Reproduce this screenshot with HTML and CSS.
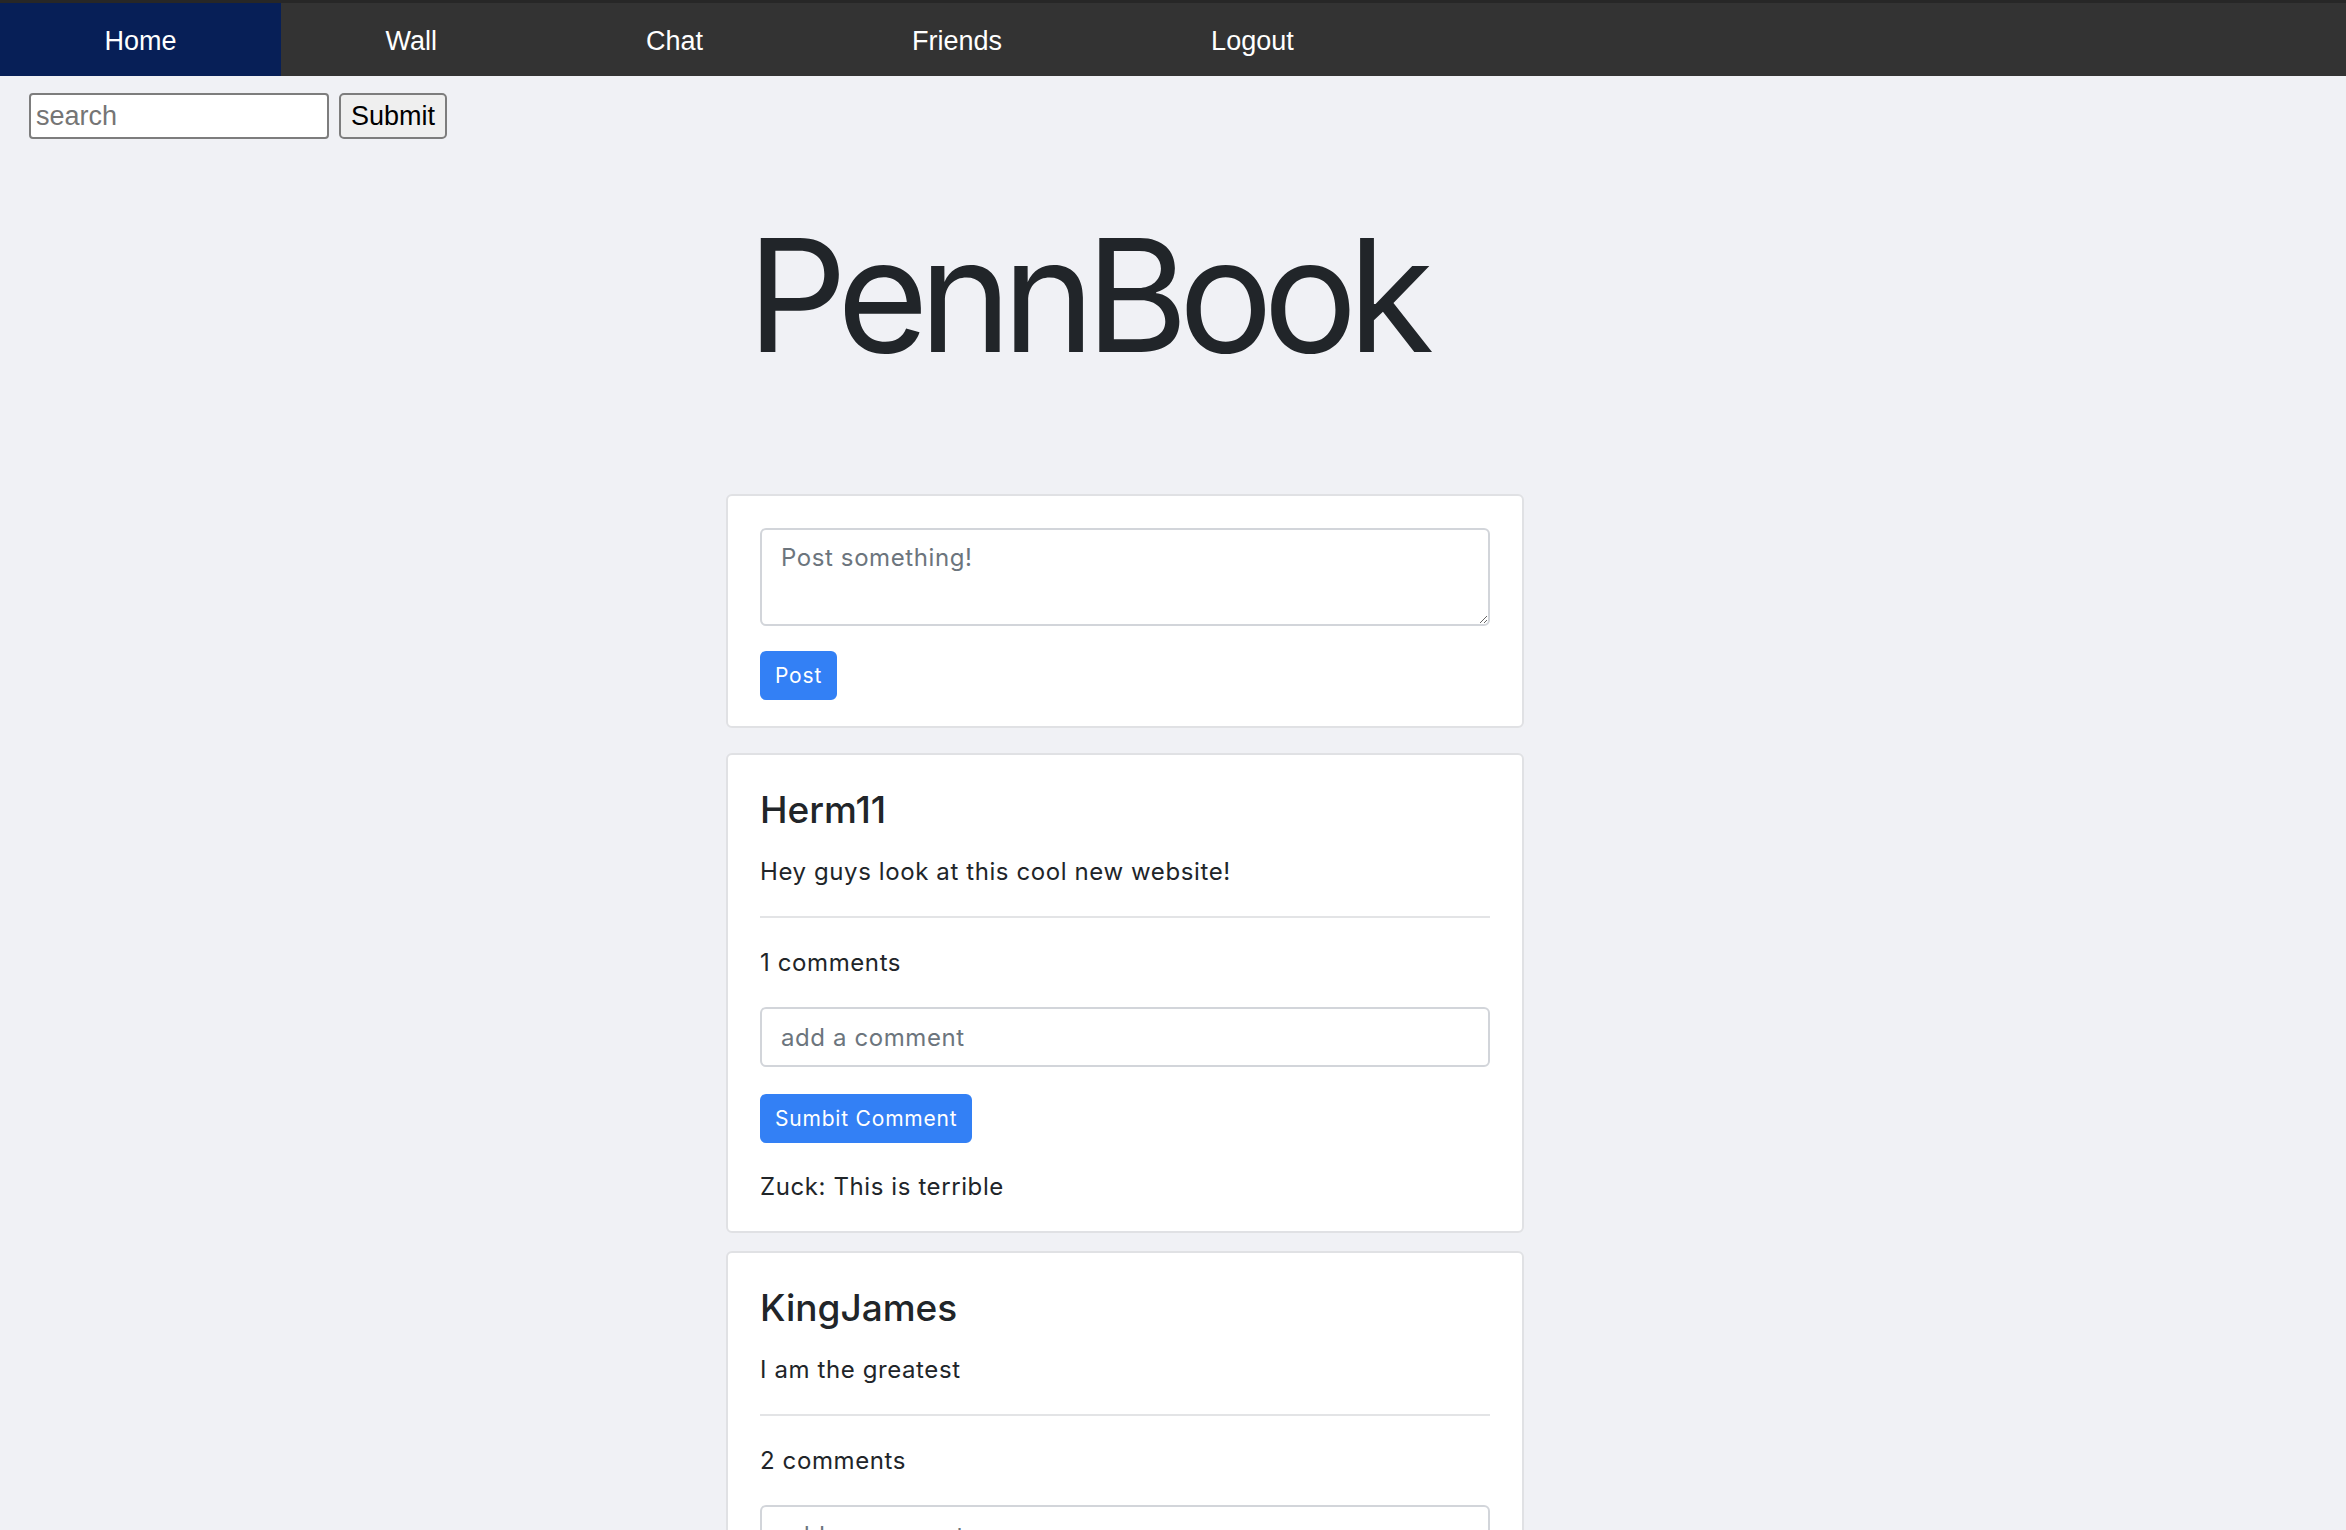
FILE: index.html
```html
<!DOCTYPE html>
<html lang="en">
<head>
<meta charset="utf-8">
<title>PennBook</title>
<link rel="stylesheet" href="styles.css">
</head>
<body>
<nav class="topnav">
  <a class="nav-link active" href="#">Home</a>
  <a class="nav-link" href="#">Wall</a>
  <a class="nav-link" href="#">Chat</a>
  <a class="nav-link" href="#">Friends</a>
  <a class="nav-link" href="#">Logout</a>
</nav>
<form class="search">
  <input class="search-input" type="text" placeholder="search">
  <button class="search-btn" type="button">Submit</button>
</form>
<h1 class="brand">PennBook</h1>
<main class="feed">
  <section class="card composer">
    <textarea class="field area" placeholder="Post something!"></textarea>
    <button class="btn" type="button">Post</button>
  </section>
  <article class="card post">
    <h4 class="author">Herm11</h4>
    <p class="text">Hey guys look at this cool new website!</p>
    <hr class="rule">
    <p class="text">1 comments</p>
    <input class="field line" type="text" placeholder="add a comment">
    <button class="btn" type="button">Sumbit Comment</button>
    <p class="text">Zuck: This is terrible</p>
  </article>
  <article class="card post">
    <h4 class="author">KingJames</h4>
    <p class="text">I am the greatest</p>
    <hr class="rule">
    <p class="text">2 comments</p>
    <input class="field line" type="text" placeholder="add a comment">
    <button class="btn" type="button">Sumbit Comment</button>
  </article>
</main>
</body>
</html>
```
FILE: styles.css
```css
* { box-sizing: border-box; }

body {
  margin: 0;
  background: #f0f1f5;
  color: #212529;
  font-family: Inter, "Noto Sans", sans-serif;
}

.topnav {
  display: flex;
  background: #333333;
  border-top: 3px solid #272727;
}

.nav-link {
  display: block;
  padding: 23px 104.5px 19px;
  line-height: 31px;
  font-family: "Liberation Sans", Arial, sans-serif;
  font-size: 27px;
  color: #ffffff;
  text-decoration: none;
}

.nav-link.active { background: #071f57; }

.search {
  display: flex;
  gap: 10px;
  margin: 17px 0 0 29px;
}

.search-input {
  width: 300px;
  height: 46px;
  padding: 0 5px;
  border: 2px solid #7d7d7d;
  border-radius: 4px;
  background: #fff;
  font-family: "Liberation Sans", Arial, sans-serif;
  font-size: 27px;
  color: #000;
}
.search-input::placeholder { color: #757575; }

.search-btn {
  width: 108px;
  height: 46px;
  padding: 0;
  border: 2px solid #7d7d7d;
  border-radius: 5px;
  background: #efefef;
  font-family: "Liberation Sans", Arial, sans-serif;
  font-size: 27px;
  color: #000;
}

.brand {
  margin: 78px 0 120px 747px;
  font-size: 157px;
  line-height: 157px;
  font-weight: 400;
  letter-spacing: -9.5px;
  color: #212529;
}

.feed {
  width: 798px;
  margin-left: 726px;
}

.card {
  display: flex;
  flex-direction: column;
  background: #fff;
  border: 2px solid #e0e1e4;
  border-radius: 6px;
}

.composer {
  gap: 25px;
  padding: 32px 32px 26px;
  margin-bottom: 25px;
}

.post {
  gap: 26.5px;
  padding: 32px 32px 26px;
  margin-bottom: 18px;
}

.field {
  display: block;
  width: 100%;
  border: 2px solid #d2d5da;
  border-radius: 6px;
  background: #fff;
  font-family: Inter, "Noto Sans", sans-serif;
  font-size: 24px;
  line-height: 36px;
  letter-spacing: 0.6px;
  color: #212529;
}
.field::placeholder { color: #6c757d; }

.area {
  height: 98px;
  padding: 10px 19px;
}

.line {
  height: 60px;
  padding: 0 19px;
}

.btn {
  align-self: flex-start;
  height: 49px;
  padding: 0 15px;
  border: 0;
  border-radius: 6px;
  background: #3380f5;
  color: #fff;
  font-family: Inter, "Noto Sans", sans-serif;
  font-size: 21px;
  letter-spacing: 0.8px;
}

.author {
  margin: 0 0 -5px;
  font-size: 37px;
  line-height: 45px;
  font-weight: 500;
}

.text {
  margin: 0;
  font-size: 24px;
  line-height: 36px;
  letter-spacing: 0.6px;
}

.rule {
  width: 100%;
  margin: 0;
  border: 0;
  border-top: 2px solid #e3e4e6;
}
```
